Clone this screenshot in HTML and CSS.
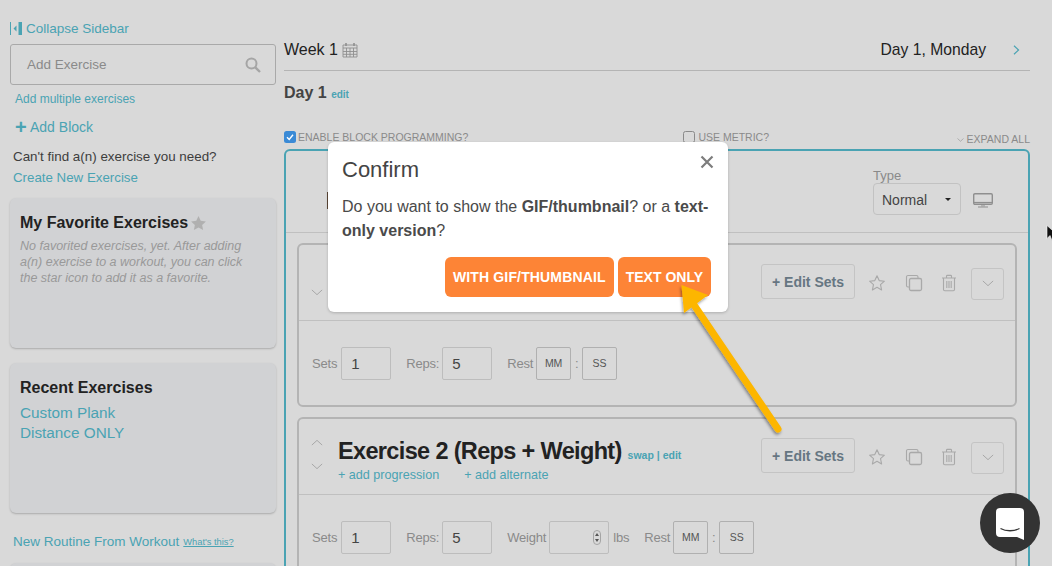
FILE: index.html
```html
<!DOCTYPE html>
<html lang="en">
<head>
<meta charset="UTF-8" />
<title>Workout Builder</title>
<link rel="stylesheet" href="styles.css">
</head>
<body>

<svg class="icon-defs" aria-hidden="true">
  <symbol id="i-star" viewBox="0 0 18 18"><path d="M9 1.8l2.2 4.8 5.2.6-3.9 3.5 1.1 5.2L9 13.3l-4.600 2.600 1.100-5.200-3.900-3.500 5.200-.6z" fill="none" stroke="currentColor" stroke-width="1.100" stroke-linejoin="round"/></symbol>
  <symbol id="i-copy" viewBox="0 0 18 18"><path d="M4 13H3a1.500 1.500 0 0 1-1.500-1.500V3A1.500 1.500 0 0 1 3 1.500h8.500A1.500 1.500 0 0 1 13 3v1" fill="none" stroke="currentColor" stroke-width="1.100"/><rect x="4.500" y="4.500" width="12" height="12" rx="1.500" fill="none" stroke="currentColor" stroke-width="1.300"/></symbol>
  <symbol id="i-trash" viewBox="0 0 16 18"><path d="M1 4h14M5.500 4V2.200c0-.5.3-.8.8-.8h3.400c.5 0 .8.3.8.8V4M2.500 4v11.500c0 .8.500 1.200 1.200 1.200h8.600c.7 0 1.200-.4 1.200-1.200V4M5.800 7v7M8 7v7M10.200 7v7" fill="none" stroke="currentColor" stroke-width="1.100"/></symbol>
  <symbol id="i-down" viewBox="0 0 14 8"><path d="M1 1l6 5.500L13 1" fill="none" stroke="currentColor" stroke-width="1.100"/></symbol>
  <symbol id="i-up" viewBox="0 0 14 8"><path d="M1 7l6-5.500L13 7" fill="none" stroke="currentColor" stroke-width="1.100"/></symbol>
</svg>

<div class="page">

  <!-- Left column -->
  <aside class="sidebar">
    <a class="collapse-link">
      <svg width="13" height="13" viewBox="0 0 13 13"><path d="M0 0h1v13H0zM8.500 0H12v13H8.500zM6.500 3.500v6L3.500 6.500z" fill="#4aa3b3"/></svg>
      Collapse Sidebar
    </a>
    <div class="search-box">
      <span>Add Exercise</span>
      <svg width="16" height="16" viewBox="0 0 16 16"><circle cx="6.500" cy="6.500" r="5" fill="none" stroke="#a5a5a5" stroke-width="2"/><path d="M10.300 10.300L15 15" stroke="#a5a5a5" stroke-width="2.400"/></svg>
    </div>
    <a class="multi-link">Add multiple exercises</a>
    <a class="add-block"><b>+</b>Add Block</a>
    <p class="cant-find">Can't find a(n) exercise you need?</p>
    <a class="create-link">Create New Exercise</a>

    <section class="side-card">
      <h3>My Favorite Exercises
        <svg width="15" height="14" viewBox="0 0 18 17"><path d="M9 0l2.700 5.800 6.300.8-4.600 4.300 1.200 6.100L9 14l-5.600 3 1.200-6.100L0 6.600l6.300-.8z" fill="#b0b0b0"/></svg>
      </h3>
      <p class="side-note">No favorited exercises, yet. After adding a(n) exercise to a workout, you can click the star icon to add it as a favorite.</p>
    </section>

    <section class="side-card">
      <h3>Recent Exercises</h3>
      <a class="recent-link">Custom Plank</a>
      <a class="recent-link">Distance ONLY</a>
    </section>

    <div class="routine-row">
      <a>New Routine From Workout</a>
      <a class="whats-this">What's this?</a>
    </div>
    <section class="side-card"></section>
  </aside>

  <!-- Workout editor -->
  <main class="editor">
    <header class="week-bar">
      <span class="week-title">Week 1
        <svg width="16" height="16" viewBox="0 0 16 16"><path d="M1 3h14v12H1zM1 6h14M1 9.500h14M1 12.300h14M4.500 6v9M8 6v9M11.500 6v9" fill="none" stroke="#8f8f8f" stroke-width=".9"/><path d="M4 1v3M12 1v3" stroke="#8f8f8f" stroke-width="1.600"/></svg>
      </span>
      <span class="day-title">Day 1, Monday
        <svg width="7" height="10" viewBox="0 0 7 10"><path d="M1 .8l4.500 4.200L1 9.200" fill="none" stroke="#4aa3b3" stroke-width="1.200"/></svg>
      </span>
    </header>

    <div class="day-row"><strong>Day 1</strong> <a>edit</a></div>

    <div class="option-row">
      <label class="option">
        <svg width="12" height="12" viewBox="0 0 12 12"><rect width="12" height="12" rx="2.500" fill="#3a8ad6"/><path d="M3 6.200l2.200 2.200L9 3.800" fill="none" stroke="#fff" stroke-width="1.400"/></svg>
        Enable Block Programming?
      </label>
      <label class="option option-metric"><span class="check-empty"></span>Use Metric?</label>
      <a class="expand-all"><svg width="7" height="4" viewBox="0 0 14 8"><use href="#i-down"/></svg> Expand All</a>
    </div>

    <section class="block">
      <div class="block-head">
        <span class="block-name"></span>
        <div class="type-field">
          <label>Type</label>
          <div class="select">Normal <i></i></div>
        </div>
        <svg class="monitor" width="20" height="15" viewBox="0 0 20 15"><rect x=".7" y=".7" width="18.600" height="10.600" rx="1.200" fill="none" stroke="#8f8f8f" stroke-width="1.400"/><path d="M.7 9.500h18.600" stroke="#8f8f8f" stroke-width="1.200"/><path d="M9 11.500v2M11 11.500v2M5 14h10" stroke="#8f8f8f" stroke-width="1"/></svg>
      </div>

      <article class="exercise">
        <div class="exercise-head">
          <div class="arrows">
            <svg class="is-first" width="12" height="7" viewBox="0 0 14 8"><use href="#i-up"/></svg>
            <svg width="12" height="7" viewBox="0 0 14 8"><use href="#i-down"/></svg>
          </div>
          <div class="exercise-info"></div>
          <button class="edit-sets">+ Edit Sets</button>
          <svg class="tool" width="18" height="18"><use href="#i-star"/></svg>
          <svg class="tool" width="18" height="18"><use href="#i-copy"/></svg>
          <svg class="tool" width="16" height="18"><use href="#i-trash"/></svg>
          <div class="expand-btn"><svg width="12" height="7" viewBox="0 0 14 8"><use href="#i-down"/></svg></div>
        </div>
        <div class="fields">
          <label>Sets</label><div class="num">1</div>
          <label class="gap">Reps:</label><div class="num">5</div>
          <label class="gap">Rest</label><div class="time">MM</div><span class="colon">:</span><div class="time">SS</div>
        </div>
      </article>

      <article class="exercise">
        <div class="exercise-head">
          <div class="arrows">
            <svg width="12" height="7" viewBox="0 0 14 8"><use href="#i-up"/></svg>
            <svg width="12" height="7" viewBox="0 0 14 8"><use href="#i-down"/></svg>
          </div>
          <div class="exercise-info">
            <h2>Exercise 2 (Reps + Weight) <small><a>swap</a> | <a>edit</a></small></h2>
            <div class="add-links"><a>+ add progression</a><a>+ add alternate</a></div>
          </div>
          <button class="edit-sets">+ Edit Sets</button>
          <svg class="tool" width="18" height="18"><use href="#i-star"/></svg>
          <svg class="tool" width="18" height="18"><use href="#i-copy"/></svg>
          <svg class="tool" width="16" height="18"><use href="#i-trash"/></svg>
          <div class="expand-btn"><svg width="12" height="7" viewBox="0 0 14 8"><use href="#i-down"/></svg></div>
        </div>
        <div class="fields">
          <label>Sets</label><div class="num">1</div>
          <label class="gap">Reps:</label><div class="num">5</div>
          <label class="gap">Weight</label>
          <div class="num weight"><span class="spinner"><svg width="6" height="11" viewBox="0 0 6 11"><path d="M3 1l2 3H1zM3 10L1 7h4z" fill="#555"/></svg></span></div>
          <label class="lbs">lbs</label>
          <label class="gap">Rest</label><div class="time">MM</div><span class="colon">:</span><div class="time">SS</div>
        </div>
      </article>
    </section>
  </main>
</div>

<!-- Confirm dialog -->
<div class="modal" role="dialog" aria-label="Confirm">
  <svg class="modal-close" width="14" height="14" viewBox="0 0 14 14"><path d="M1.500 1.500l11 11M12.500 1.500l-11 11" stroke="#7d7d7d" stroke-width="2.200"/></svg>
  <h4>Confirm</h4>
  <p>Do you want to show the <b>GIF/thumbnail</b>? or a <b>text-only version</b>?</p>
  <div class="modal-actions">
    <button>With GIF/Thumbnail</button>
    <button>Text Only</button>
  </div>
</div>

<!-- Annotation arrow drawn over the screenshot -->
<svg class="callout" width="1052" height="566" viewBox="0 0 1052 566" aria-hidden="true">
  <defs><filter id="arrow-shadow" x="-20%" y="-20%" width="140%" height="140%"><feDropShadow dx="-1" dy="2" stdDeviation="1.500" flood-color="#000" flood-opacity=".4"/></filter></defs>
  <g filter="url(#arrow-shadow)">
    <path d="M778 429L690 299" stroke="#fdb600" stroke-width="7" stroke-linecap="round"/>
    <path d="M681.500 285L708 295 684 313z" fill="#fdb600"/>
  </g>
</svg>

<!-- Mouse pointer, cut off by the window edge -->
<svg class="pointer" width="8" height="16" viewBox="0 0 8 16"><path d="M1 .5v13l3-3 2 5 3-1-2-5h4z" fill="#111" stroke="#fff" stroke-width=".6"/></svg>

<!-- Chat launcher -->
<div class="chat-btn">
  <svg width="28" height="32" viewBox="0 0 28 32"><path d="M4 0h20a4 4 0 0 1 4 4v28l-7-3H4a4 4 0 0 1-4-4V4a4 4 0 0 1 4-4z" fill="#fff"/><path d="M4.500 20.500c5.500 3 13.500 3 19 0" fill="none" stroke="#333" stroke-width="1.300"/></svg>
</div>

</body>
</html>
```

FILE: styles.css
```css
:root {
  --bg: #d9d9d9;
  --teal: #4aa3b3;
  --line: #b4b4b4;
  --thin-line: #c0c0c0;
  --muted: #8a8a8a;
  --text: #444;
  --dark: #222;
  --orange: #fd8436;
}
*, *::before, *::after {
  box-sizing: border-box;
}
html, body {
  margin: 0;
  height: 566px;
  overflow: hidden;
  background: var(--bg);
  font-family: "Liberation Sans", Arial, sans-serif;
  color: var(--text);
}
a {
  color: var(--teal);
}
.icon-defs {
  display: none;
}
.page {
  display: flex;
  align-items: flex-start;
  gap: 8px;
  height: 566px;
  overflow: hidden;
  padding-left: 10px;
}

/* Sidebar */
.sidebar {
  width: 266px;
  flex: none;
  padding-top: 20px;
}
.collapse-link {
  display: flex;
  align-items: center;
  gap: 3px;
  height: 16px;
  font-size: 13.500px;
}
.search-box {
  display: flex;
  justify-content: space-between;
  align-items: center;
  height: 41px;
  margin-top: 8px;
  padding: 0 14px 0 16px;
  border: 1px solid #a9a9a9;
  border-radius: 3px;
  font-size: 13.500px;
  color: var(--muted);
}
.multi-link {
  display: block;
  margin: 7px 0 0 5px;
  font-size: 12px;
  line-height: 14px;
}
.add-block {
  display: flex;
  align-items: center;
  margin: 13px 0 0 5px;
  font-size: 14px;
  line-height: 16px;
}
.add-block b {
  width: 15px;
  font-size: 20px;
  line-height: 14px;
}
.cant-find {
  margin: 14px 0 0 3px;
  font-size: 13.400px;
  line-height: 16px;
  color: #3d3d3d;
}
.create-link {
  display: block;
  margin: 5px 0 0 3px;
  font-size: 13.300px;
  line-height: 16px;
}
.side-card {
  height: 150px;
  margin-top: 15px;
  padding: 15px 10px;
  background: #d1d2d4;
  border-radius: 6px;
  box-shadow: 0 1px 2px rgba(0, 0, 0, 0.22);
}
.create-link + .side-card {
  margin-top: 12px;
}
.side-card h3 {
  display: flex;
  align-items: center;
  gap: 3px;
  margin: 0;
  font-size: 16px;
  line-height: 20px;
  color: var(--dark);
}
.side-note {
  max-width: 230px;
  margin: 5px 0 0;
  font-size: 12.500px;
  line-height: 16px;
  font-style: italic;
  color: #999;
}
.recent-link {
  display: block;
  font-size: 15.300px;
  line-height: 20px;
}
.side-card h3 + .recent-link {
  margin-top: 5px;
}
.routine-row {
  display: flex;
  align-items: center;
  gap: 4px;
  margin: 21px 0 0 3px;
  font-size: 13.500px;
  line-height: 16px;
}
.whats-this {
  font-size: 9.300px;
  line-height: 12px;
  text-decoration: underline;
}
.routine-row + .side-card {
  margin-top: 13px;
}

/* Week and day heading */
.editor {
  width: 746px;
  flex: none;
  padding-top: 40px;
}
.week-bar {
  display: flex;
  justify-content: space-between;
  align-items: center;
  height: 31px;
  padding-bottom: 10px;
  border-bottom: 1px solid var(--line);
  font-size: 16px;
  color: #222;
}
.week-title {
  display: flex;
  align-items: center;
  gap: 4px;
}
.day-title {
  display: flex;
  align-items: center;
  gap: 27px;
  padding-right: 10px;
  font-size: 15.700px;
}
.day-row {
  margin-top: 12px;
  font-size: 16px;
  line-height: 20px;
}
.day-row a {
  font-size: 10px;
  font-weight: bold;
}
.option-row {
  display: flex;
  align-items: center;
  height: 14px;
  margin-top: 25px;
  font-size: 10.500px;
  text-transform: uppercase;
  color: var(--muted);
}
.option {
  display: flex;
  align-items: center;
  gap: 2px;
}
.option-metric {
  margin-left: 215px;
  gap: 3px;
}
.check-empty {
  width: 12px;
  height: 12px;
  border: 1px solid #8a8a8a;
  border-radius: 2.500px;
}
.expand-all {
  margin-left: auto;
  padding-top: 4px;
  color: var(--muted);
}
.expand-all svg {
  vertical-align: 1px;
}

/* Block and exercise cards */
.block {
  margin-top: 5px;
  padding-bottom: 12px;
  border: 2px solid var(--teal);
  border-radius: 6px;
}
.block-head {
  display: flex;
  align-items: flex-end;
  height: 82px;
  padding: 0 35px 17px 41px;
  border-bottom: 1px solid var(--thin-line);
}
.block-name {
  width: 1px;
  height: 17px;
  margin: 0 auto 6px 0;
  background: #5b4636;
}
.type-field label {
  display: block;
  font-size: 13px;
  line-height: 14px;
  color: var(--muted);
}
.select {
  display: flex;
  align-items: center;
  justify-content: space-between;
  width: 88px;
  height: 32px;
  padding: 2px 9px 0 8px;
  border: 1px solid #c2c2c2;
  border-radius: 4px;
  font-size: 14px;
}
.select i {
  margin-top: -2px;
  border-top: 3px solid #222;
  border-left: 3px solid transparent;
  border-right: 3px solid transparent;
}
.monitor {
  margin: 0 0 7px 12px;
}
.exercise {
  margin: 10px 11px 0;
  border: 2px solid var(--line);
  border-radius: 6px;
}
.exercise-head {
  display: flex;
  align-items: center;
  height: 76px;
  padding: 0 11px 0 12px;
  border-bottom: 1px solid var(--thin-line);
}
.arrows {
  display: flex;
  flex-direction: column;
  gap: 17px;
  width: 27px;
  flex: none;
  margin-top: -5px;
  color: #a5a5a5;
}
.arrows .is-first {
  visibility: hidden;
}
.exercise-info {
  margin: 5px auto 0 0;
}
.exercise-info h2 {
  margin: 1px 0 0;
  font-size: 23.500px;
  line-height: 28px;
  letter-spacing: -0.650px;
  color: var(--dark);
}
.exercise-info small {
  font-size: 10.500px;
  letter-spacing: 0;
  color: var(--teal);
}
.add-links {
  display: flex;
  gap: 25px;
  margin-top: -2px;
  font-size: 12.600px;
  line-height: 16px;
}
.edit-sets {
  width: 94px;
  height: 35px;
  margin-top: -2px;
  padding: 0;
  background: transparent;
  border: 1px solid #c4c4c4;
  border-radius: 3px;
  font-family: inherit;
  font-size: 14px;
  font-weight: bold;
  color: #667682;
}
.tool {
  flex: none;
  margin: 1px 0 0 13px;
  color: #a9a9a9;
}
.edit-sets + .tool {
  margin-right: 1px;
}
.tool + .tool {
  margin-left: 18px;
}
.expand-btn {
  display: flex;
  align-items: center;
  justify-content: center;
  width: 33px;
  height: 32px;
  margin: 2px 0 0 14px;
  border: 1px solid #c4c4c4;
  border-radius: 3px;
  color: #a5a5a5;
}
.fields {
  display: flex;
  align-items: center;
  height: 84px;
  padding: 0 0 0 13px;
  font-size: 13px;
  letter-spacing: -0.200px;
  color: var(--muted);
}
.fields label {
  margin-right: 4px;
}
.fields .gap {
  margin: 0 3px 0 15px;
}
.num {
  position: relative;
  width: 50px;
  height: 33px;
  padding-left: 9px;
  border: 1px solid #bdbdbd;
  border-radius: 2px;
  font-size: 15px;
  line-height: 31px;
  letter-spacing: 0;
  color: #444;
}
.weight {
  width: 60px;
}
.spinner {
  position: absolute;
  right: 7px;
  top: 8px;
  display: flex;
  align-items: center;
  justify-content: center;
  width: 8px;
  height: 15px;
  border: 1px solid #a5a5a5;
  border-radius: 4px;
}
.time {
  width: 35px;
  height: 33px;
  border: 1px solid #b0b0b0;
  border-radius: 2px;
  font-size: 10.500px;
  line-height: 31px;
  letter-spacing: 0;
  text-align: center;
  color: #555;
}
.colon {
  width: 11px;
  text-align: center;
}
.fields .lbs {
  margin: 0 0 0 4px;
}

/* Dialog */
.modal {
  position: absolute;
  left: 328px;
  top: 142px;
  width: 400px;
  height: 170px;
  padding: 14px 14px;
  background: #fff;
  border-radius: 6px;
  box-shadow: 0 1px 3px rgba(0, 0, 0, 0.2);
}
.modal h4 {
  margin: 0;
  font-size: 22px;
  line-height: 28px;
  font-weight: normal;
  color: #444;
}
.modal p {
  margin: 11px 0 0;
  font-size: 16px;
  line-height: 24px;
  color: #4a4a4a;
}
.modal-close {
  position: absolute;
  right: 14px;
  top: 13px;
}
.modal-actions {
  display: flex;
  justify-content: flex-end;
  gap: 4px;
  margin: 14px 3px 0 0;
}
.modal-actions button {
  height: 40px;
  padding: 0 8px;
  background: var(--orange);
  border: 0;
  border-radius: 6px;
  font-family: inherit;
  font-size: 14px;
  font-weight: bold;
  text-transform: uppercase;
  color: #fff;
}
.modal-actions button:first-child {
  letter-spacing: 0.150px;
}

/* Things on top of the shot */
.callout {
  position: absolute;
  left: 0;
  top: 0;
  pointer-events: none;
}
.pointer {
  position: absolute;
  left: 1046px;
  top: 225px;
}
.chat-btn {
  position: absolute;
  left: 980px;
  top: 493px;
  display: flex;
  align-items: center;
  justify-content: center;
  width: 60px;
  height: 60px;
  padding-top: 2px;
  background: #333;
  border-radius: 50%;
}
```
